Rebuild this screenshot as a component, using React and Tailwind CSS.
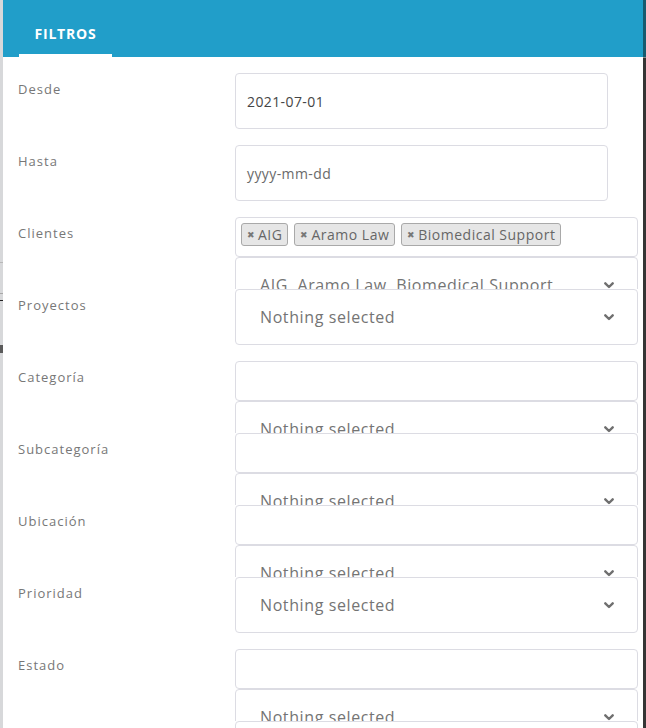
import React from "react";

const font = { fontFamily: '"Open Sans", "Liberation Sans", sans-serif' };

function Chevron() {
  return (
    <svg width="10" height="7" viewBox="0 0 10 7" className="shrink-0">
      <path d="M1.3 1.3 L5 5 L8.7 1.3" fill="none" stroke="#6f6f6f" strokeWidth="2.4" strokeLinecap="round" strokeLinejoin="round" />
    </svg>
  );
}

function Select({ text }) {
  return (
    <div className="h-[56px] w-[403px] shrink-0 border border-[#dcdce3] rounded-[4px] bg-white flex items-center pl-[24px] pr-[23px]">
      <span className="flex-1 text-[16px] tracking-[0.6px] text-[#747474] whitespace-nowrap overflow-hidden">{text}</span>
      <Chevron />
    </div>
  );
}

function Input({ value, placeholder, h = "h-[40px]", w = "w-[403px]" }) {
  return (
    <div className={`${h} ${w} shrink-0 border border-[#dcdce3] rounded-[4px] bg-white flex items-center px-[11px] text-[14px] tracking-[0.4px]`}>
      {value ? (
        <span className="text-[#454545]">{value}</span>
      ) : placeholder ? (
        <span className="text-[#6a6a6a]">{placeholder}</span>
      ) : null}
    </div>
  );
}

function Tag({ children }) {
  return (
    <div className="h-[23px] flex items-center gap-[3px] px-[5px] bg-[#e6e6e6] border border-[#a9a9a9] rounded-[3px] text-[14px] tracking-[0.5px] text-[#666]">
      <span className="text-[9px] text-[#777] leading-none tracking-normal">✖</span>
      <span className="leading-none">{children}</span>
    </div>
  );
}

function Row({ label, children }) {
  return (
    <div className="relative bg-white h-[72px] flex">
      <div className="w-[217px] shrink-0 pt-[6px] text-[13px] leading-[20px] tracking-[1px] text-[#777]">{label}</div>
      <div className="flex flex-col">{children}</div>
    </div>
  );
}

export default function App() {
  return (
    <div className="w-[646px] h-[728px] overflow-hidden flex bg-white" style={font}>
      {/* left backdrop strip */}
      <div className="w-[3px] shrink-0 flex flex-col bg-[#d7d8da]">
        <div className="h-[262px] shrink-0" />
        <div className="h-px shrink-0 bg-[#b8b8b8]" />
        <div className="h-[30px] shrink-0" />
        <div className="h-px shrink-0 bg-[#a8a8a8]" />
        <div className="h-[6px] shrink-0" />
        <div className="h-px shrink-0 bg-[#222]" />
        <div className="h-[44px] shrink-0" />
        <div className="h-[8px] shrink-0 bg-[#5a5a5a]" />
      </div>

      {/* panel */}
      <div className="w-[640px] shrink-0 flex flex-col">
        <div className="h-[57px] shrink-0 bg-[#219ec9] flex">
          <div className="ml-[16px] w-[93px] h-full flex flex-col justify-end items-center">
            <span className="text-white text-[14px] font-bold leading-[20px] pb-[10px] tracking-[0.8px]">FILTROS</span>
            <div className="h-[3px] w-full bg-white" />
          </div>
        </div>
        <div className="pl-[15px] pt-[16px] flex flex-col">
          <Row label="Desde">
            <Input value="2021-07-01" h="h-[56px]" w="w-[373px]" />
          </Row>
          <Row label="Hasta">
            <Input placeholder="yyyy-mm-dd" h="h-[56px]" w="w-[373px]" />
          </Row>
          <Row label="Clientes">
            <div className="h-[40px] w-[403px] shrink-0 border border-[#dcdce3] rounded-[4px] bg-white flex items-start gap-[6px] pl-[5px] pt-[5px]">
              <Tag>AIG</Tag>
              <Tag>Aramo Law</Tag>
              <Tag>Biomedical Support</Tag>
            </div>
            <Select text="AIG, Aramo Law, Biomedical Support" />
          </Row>
          <Row label="Proyectos">
            <Select text="Nothing selected" />
          </Row>
          <Row label="Categoría">
            <Input />
            <Select text="Nothing selected" />
          </Row>
          <Row label="Subcategoría">
            <Input />
            <Select text="Nothing selected" />
          </Row>
          <Row label="Ubicación">
            <Input />
            <Select text="Nothing selected" />
          </Row>
          <Row label="Prioridad">
            <Select text="Nothing selected" />
          </Row>
          <Row label="Estado">
            <Input />
            <Select text="Nothing selected" />
          </Row>
          <Row label="">
            <Input />
          </Row>
        </div>
      </div>

      {/* right backdrop strip */}
      <div className="w-[3px] shrink-0 flex flex-col">
        <div className="h-[57px] shrink-0 bg-[#175a6f]" />
        <div className="h-px shrink-0 bg-[#8a8a8a]" />
        <div className="flex-1 bg-[#353535]" />
      </div>
    </div>
  );
}
